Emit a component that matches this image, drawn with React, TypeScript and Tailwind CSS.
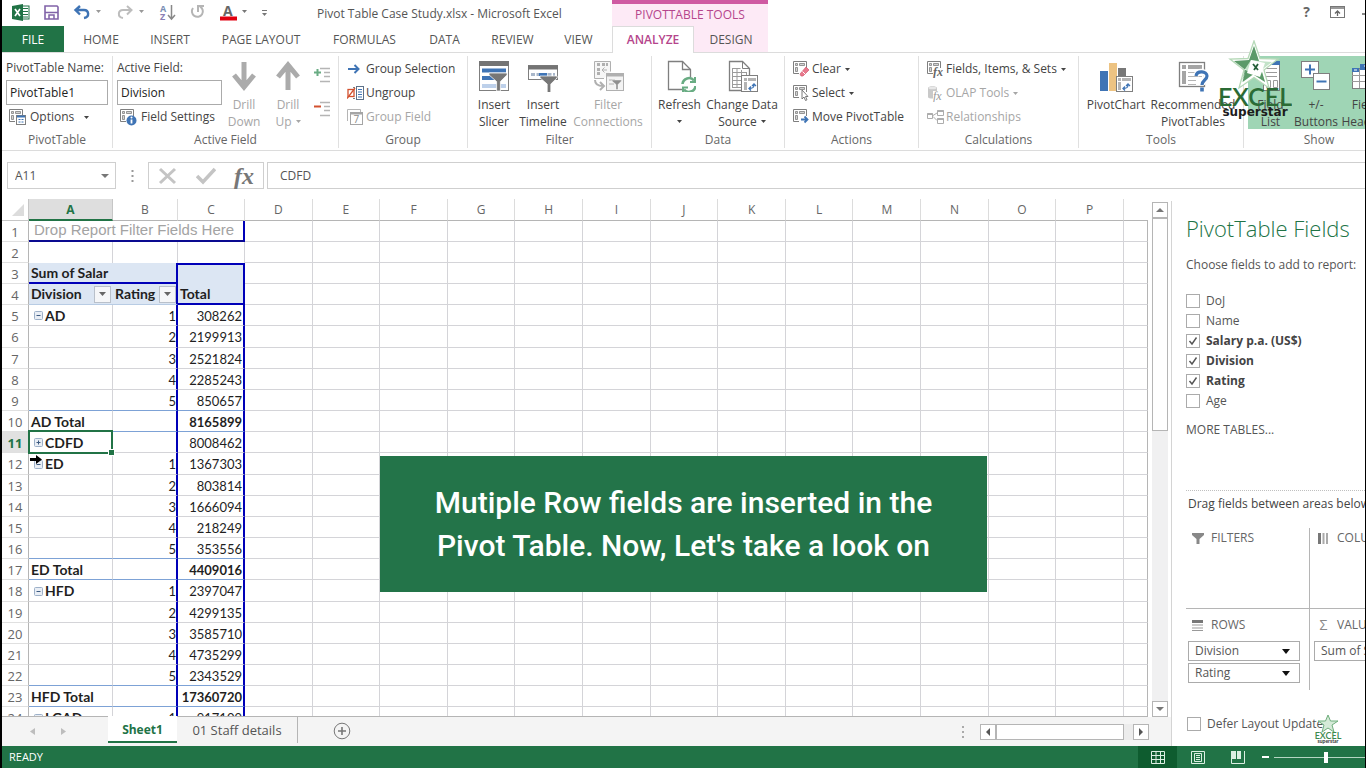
import React from "react";
import type { ReactNode } from "react";

const GRAY = "#7f7f7f";
const BLUE = "#3f74b5";

/* ---------- icons ---------- */

function Svg({ w, h, children, className = "" }: { w: number; h: number; children: ReactNode; className?: string }) {
  return (
    <svg width={w} height={h} viewBox={`0 0 ${w} ${h}`} fill="none" aria-hidden="true" className={`shrink-0 ${className}`}>
      {children}
    </svg>
  );
}

function Caret({ className = "" }: { className?: string }) {
  return (
    <Svg w={5} h={3} className={`inline-block align-middle ${className}`}>
      <path d="M0 0h5L2.5 3z" fill="currentColor" />
    </Svg>
  );
}

function MiniGrid({ color = GRAY }: { color?: string }) {
  return (
    <>
      <path d="M0.5 12.5V0.5H13.5V7M0.5 12.5H6" stroke={color} />
      <path d="M2.5 2.5h2v2h-2zM2.5 6.5h2v4h-2zM6.5 2.5h5v2h-5z" stroke={color} fill={color} fillOpacity="0.35" strokeWidth="0.8" />
    </>
  );
}

const icons = {
  options: (
    <Svg w={17} h={16}>
      <MiniGrid />
      <rect x="7.5" y="6.5" width="9" height="9" fill="#fff" stroke={GRAY} />
      <path d="M8 7.500h8" stroke={BLUE} strokeWidth="2" />
      <path d="M9.500 10.500h2M12.500 10.500h2M9.500 13h2M12.500 13h2" stroke={BLUE} />
    </Svg>
  ),
  fieldSettings: (
    <Svg w={17} h={17}>
      <MiniGrid />
      <circle cx="11.500" cy="11.500" r="5" fill={BLUE} />
      <path d="M11.500 10.500v4" stroke="#fff" strokeWidth="1.800" />
      <circle cx="11.500" cy="8.500" r="1" fill="#fff" />
    </Svg>
  ),
  clear: (
    <Svg w={16} h={16}>
      <MiniGrid />
      <path d="M7 13l6-7 3 3-6 6H8z" fill="#e8798c" stroke="#d4586f" strokeWidth="0.700" />
      <path d="M9.500 10.500l3 3" stroke="#fff" />
    </Svg>
  ),
  select: (
    <Svg w={16} h={16}>
      <MiniGrid />
      <path d="M9 5v9l2-2 1.500 3.500 1.500-.7-1.500-3.300h2.500z" fill="#fff" stroke="#6b6b6b" strokeWidth="0.900" />
    </Svg>
  ),
  move: (
    <Svg w={16} h={16}>
      <MiniGrid />
      <path d="M8 10.500h6M11.500 7.500l3 3-3 3" stroke={BLUE} strokeWidth="1.800" />
    </Svg>
  ),
  fields: (
    <Svg w={17} h={17}>
      <MiniGrid />
      <rect x="6" y="7" width="11" height="10" fill="#fff" />
      <text x="6" y="15" fontSize="12" fontStyle="italic" fontWeight="bold" fontFamily="Liberation Serif, serif" fill="#666">fx</text>
    </Svg>
  ),
  olap: (
    <Svg w={17} h={17}>
      <path d="M1 3c0-2.500 9-2.500 9 0v9c0 2-9 2-9 0z" fill="#c9c9c9" />
      <ellipse cx="5.500" cy="3" rx="4" ry="1.300" fill="#e8e8e8" />
      <rect x="6" y="6" width="11" height="10" fill="#fff" />
      <text x="6" y="15" fontSize="12" fontStyle="italic" fontFamily="Liberation Serif, serif" fill="#999">fx</text>
    </Svg>
  ),
  relations: (
    <Svg w={17} h={16}>
      <g stroke="#adadad">
        <path d="M.5 4.500h5v5h-5zM10.500 1.500h6v5h-6zM10.500 9.500h6v5h-6zM6 6.500l4-2.500M6 7.500l4 4" />
        <path d="M.5 5h5M10.500 2h6M10.500 10h6" strokeWidth="2" />
      </g>
    </Svg>
  ),
  groupSelection: (
    <Svg w={14} h={12}>
      <path d="M1 6h10M7.500 2l4 4-4 4" stroke={BLUE} strokeWidth="2" />
    </Svg>
  ),
  ungroup: (
    <Svg w={17} h={14}>
      <rect x="9.500" y=".5" width="7" height="13" fill="#fff" stroke="#5d7189" />
      <path d="M11 3.500h4M11 6h4M11 8.500h4M11 11h4" stroke={BLUE} />
      <path d="M8 1.500H6M8 12.500H6" stroke={GRAY} />
      <rect x="1" y="3.500" width="6" height="7" fill="#fff" stroke="#d2512f" strokeWidth="1.300" />
      <path d="M0 12.500L8 2" stroke="#d2512f" strokeWidth="1.300" />
    </Svg>
  ),
  groupField: (
    <Svg w={17} h={17}>
      <path d="M.5 12V.5h13V3" stroke="#b5b5b5" />
      <rect x="3.500" y="3.500" width="12" height="12" fill="#fff" stroke="#a5a5a5" />
      <path d="M4 4.500h11" stroke="#a5a5a5" strokeWidth="2" />
      <text x="6.500" y="14" fontSize="10" fontFamily="Open Sans, sans-serif" fill="#8c8c8c">7</text>
    </Svg>
  ),
};

function Funnel({ x, y, s = 1, fill = "#777" }: { x: number; y: number; s?: number; fill?: string }) {
  return <path transform={`translate(${x} ${y}) scale(${s})`} d="M0 0h19v2l-7 7v10h-4V9L0 2z" fill={fill} stroke="#fff" strokeWidth=".8" />;
}

const bigIcons = {
  drillDown: (
    <Svg w={32} h={32}>
      <path d="M16 2v24M6 15l10 12 10-12" stroke="#ababab" strokeWidth="5" />
    </Svg>
  ),
  drillUp: (
    <Svg w={32} h={32}>
      <path d="M16 30V5M6 17L16 5l10 12" stroke="#ababab" strokeWidth="5" />
    </Svg>
  ),
  slicer: (
    <Svg w={32} h={32}>
      <rect x="1.500" y="1.500" width="29" height="29" fill="#fff" stroke={GRAY} />
      <path d="M1 3.500h30" stroke="#747474" strokeWidth="5" />
      <path d="M4 10.500h24M4 18h14" stroke={BLUE} strokeWidth="4" />
      <path d="M4 26h24" stroke="#bdd0ea" strokeWidth="4" />
      <Funnel x={11} y={13} s={0.95} />
    </Svg>
  ),
  timeline: (
    <Svg w={32} h={32}>
      <rect x="1.500" y="5.500" width="29" height="14" fill="#fff" stroke={GRAY} />
      <path d="M1 7.500h30" stroke="#747474" strokeWidth="4" />
      <path d="M4 14.500h24" stroke="#a9b7ca" strokeWidth="3" strokeDasharray="4 1.500" />
      <path d="M12 14.500h8" stroke={BLUE} strokeWidth="3" />
      <Funnel x={13} y={16} s={0.9} />
    </Svg>
  ),
  connections: (
    <Svg w={32} h={32}>
      <g stroke="#b0b0b0">
        <path d="M12 18.500H2.500v-17h16v10" fill="#f6f6f6" />
        <path d="M5 4.500h3M10 4.500h6M6.500 8v8" strokeWidth="3" strokeDasharray="3 1" />
        <path d="M10 10h5M12.500 7.500L10 10l2.500 2.500" />
        <path d="M3 20c0 4 3 6 8 6M8 22l4 4-4 4" strokeWidth="2" />
        <rect x="14.500" y="13.500" width="17" height="17" fill="#f3f3f3" />
        <path d="M14 15h18" strokeWidth="3" />
        <path d="M17 20h6M17 24h5" />
      </g>
      <Funnel x={20} y={20} s={0.5} fill="#8f8f8f" />
    </Svg>
  ),
  refresh: (
    <Svg w={32} h={32}>
      <path d="M4.500 29.500v-28h14l8 8v20z" fill="#fff" stroke={GRAY} strokeWidth="1.300" />
      <path d="M18.500 1.500v8h8" stroke={GRAY} strokeWidth="1.300" />
      <circle cx="25" cy="25" r="8" fill="#fff" />
      <g stroke="#69ac83" strokeWidth="2.600">
        <path d="M18.500 24a6.500 6.500 0 0 1 11.500-3.500M31.500 26a6.500 6.500 0 0 1-11.500 3.500" />
        <path d="M31 17v5h-5M19 32.500v-5h5" strokeWidth="2" />
      </g>
    </Svg>
  ),
  changeSource: (
    <Svg w={32} h={32}>
      <path d="M3.500 30.500v-29h13l7 7v22z" fill="#fff" stroke={GRAY} strokeWidth="1.300" />
      <path d="M16.500 1.500v7h7" stroke={GRAY} />
      <path d="M6.500 8.500h8M6.500 12.500h14M6.500 16.500h14M6.500 20.500h14M6.500 24.500h14M6.500 27.500h14M6.500 8v20M11 8v20M15.500 10v18M20.500 12v16" stroke="#9b9b9b" />
      <rect x="15.500" y="15.500" width="16" height="16" fill="#fff" stroke={GRAY} />
      <path d="M18 18h3v3h-3zM22 18h8v3h-8zM18 22h3v8h-3z" fill="#b4b4b4" />
      <path d="M23 28.500c4 0 5-1 5-4M25 26.500l-2 2 2 2M26 26l2-2 2 2" stroke={BLUE} strokeWidth="1.300" />
    </Svg>
  ),
  chart: (
    <Svg w={34} h={32}>
      <rect x="1" y="11" width="8" height="20" fill={BLUE} />
      <rect x="10" y="3" width="8" height="28" fill="#edc382" />
      <rect x="19" y="8" width="8" height="12" fill="#777" />
      <rect x="17.500" y="16.500" width="16" height="15" fill="#fff" stroke={GRAY} />
      <path d="M19 18h3v3h-3zM23 18h9v3h-9zM19 22h3v8h-3z" fill="#b4b4b4" />
      <path d="M24 28.500c4 0 5-1 5-4M26 26.500l-2 2 2 2M27 26l2-2 2 2" stroke={BLUE} strokeWidth="1.300" />
    </Svg>
  ),
  recommended: (
    <Svg w={32} h={32}>
      <rect x="2.500" y="2.500" width="25" height="24" fill="#fff" stroke={GRAY} strokeWidth="1.300" />
      <path d="M5 5h4v4H5zM11 5h14v4H11zM5 11h4v13H5z" fill="#a5a5a5" />
      <path d="M11 12.500h14M11 16.500h14M11 20.500h8M11 24.500h8" stroke="#b4b4b4" />
      <path d="M19 16c1-6 11-5 11 0 0 4-5 4-5 9" stroke="#fff" strokeWidth="6" />
      <path d="M19 16c1-6 11-5 11 0 0 4-5 4-5 9" stroke={BLUE} strokeWidth="3.200" />
      <rect x="23.200" y="27.500" width="3.600" height="4" fill={BLUE} />
    </Svg>
  ),
  fieldList: (
    <Svg w={32} h={32}>
      <rect x="8.500" y="1.500" width="16" height="29" fill="#fff" stroke={GRAY} />
      <path d="M8 3h17" stroke={BLUE} strokeWidth="4" />
      <path d="M11 8.500h11M11 12.500h11M11 16.500h11" stroke="#9b9b9b" />
      <path d="M11.500 20.500h4v7h-4zM18.500 20.500h4v7h-4z" stroke="#9b9b9b" />
    </Svg>
  ),
  plusMinus: (
    <Svg w={32} h={32}>
      <rect x="1.500" y="1.500" width="17" height="16" fill="#fff" stroke={GRAY} />
      <path d="M5 9.500h10M10 4.500v10" stroke={BLUE} strokeWidth="2" />
      <rect x="13.500" y="13.500" width="16" height="16" fill="#fff" stroke={GRAY} />
      <path d="M16.500 21.500h10" stroke={BLUE} strokeWidth="2" />
    </Svg>
  ),
  headers: (
    <Svg w={32} h={32}>
      <rect x="3.500" y="8.500" width="30" height="20" fill="#fff" stroke={GRAY} />
      <path d="M3 15.500h30M3 21.500h30M10.500 9v19M18 9v19" stroke="#9b9b9b" />
      <path d="M3 8h7v4H3zM11 4h21v6H11z" fill={BLUE} />
      <path d="M5 10h3M15 6h4" stroke="#fff" />
    </Svg>
  ),
};

function SuperstarLogo() {
  return (
    <Svg w={74} h={80}>
      <g transform="translate(36 1)">
        <path d="M0 0l6 17.500 18 .5-14 11 5 18-15-10.500L-15 47l5-18-14-11 18-.5z" fill="#fff" stroke="#b6d9b8" strokeWidth="1.300" />
        <path d="M0 5l4.500 15L18 21 7.500 29 11 41 0 33l-11 8 3.500-12L-18 21l13.500-1z" fill="#c2e3c8" />
        <path d="M0 5l5 15-8-1-6 9-3 13 3.500-12L-20 20l15-1zM11 41L0 34l8-3zM-8.500 29l-3 12 11-8z" fill="#5b9a69" />
        <path d="M-3 19l14 3-5 14-13-4z" fill="#fff" />
        <path d="M4 23l-4 6M-1 23l5 6" stroke="#245f39" strokeWidth="1.800" />
      </g>
      <text x="37" y="66" textAnchor="middle" fontSize="25" fontWeight="600" fontFamily="Lato, sans-serif" fill="#2b6b35">EXCEL</text>
      <text x="37" y="76" textAnchor="middle" fontSize="12" fontWeight="bold" fontFamily="DejaVu Sans, sans-serif" fill="#1c1c1c">superstar</text>
    </Svg>
  );
}

/* ---------- ribbon pieces ---------- */

function Group({ label, width, children, last = false }: { label: string; width: string; children: ReactNode; last?: boolean }) {
  return (
    <section aria-label={label} className={`flex shrink-0 flex-col ${width}`}>
      <div className={`flex h-[92px] flex-col ${last ? "" : "border-r border-[#e0e0e0]"}`}>
        <div className="flex h-[77px]">{children}</div>
        <div className="pt-px text-center leading-4 text-[#666]">{label}</div>
      </div>
    </section>
  );
}

function Row({ icon, children, disabled = false, caret = false }: { icon: ReactNode; children: ReactNode; disabled?: boolean; caret?: boolean }) {
  return (
    <button type="button" disabled={disabled} className={`flex h-6 items-center whitespace-nowrap ${disabled ? "text-[#a6a6a6]" : "text-[#444]"}`}>
      <span className="flex w-[19px] shrink-0">{icon}</span>
      {children}
      {caret && <Caret className="ml-1" />}
    </button>
  );
}

function Big({ icon, lines, width, disabled = false, caret = false }: { icon: ReactNode; lines: string[]; width: string; disabled?: boolean; caret?: boolean }) {
  return (
    <button type="button" disabled={disabled} className={`flex shrink-0 flex-col items-center pt-1 leading-[17px] ${width} ${disabled ? "text-[#a6a6a6]" : "text-[#444]"}`}>
      {icon}
      <span className="mt-1 whitespace-nowrap">{lines[0]}</span>
      <span className="flex min-h-[17px] items-center whitespace-nowrap">
        {lines[1]}
        {caret && <Caret className={lines[1] ? "ml-1" : ""} />}
      </span>
    </button>
  );
}

/* ---------- worksheet data ---------- */

type SheetRow = { n: number; a?: string; sign?: "+" | "-"; b?: string; c?: string; total?: boolean };

const sheetRows: SheetRow[] = [
  { n: 5, a: "AD", sign: "-", b: "1", c: "308262" },
  { n: 6, b: "2", c: "2199913" },
  { n: 7, b: "3", c: "2521824" },
  { n: 8, b: "4", c: "2285243" },
  { n: 9, b: "5", c: "850657" },
  { n: 10, a: "AD Total", c: "8165899", total: true },
  { n: 11, a: "CDFD", sign: "+", c: "8008462" },
  { n: 12, a: "ED", sign: "-", b: "1", c: "1367303" },
  { n: 13, b: "2", c: "803814" },
  { n: 14, b: "3", c: "1666094" },
  { n: 15, b: "4", c: "218249" },
  { n: 16, b: "5", c: "353556" },
  { n: 17, a: "ED Total", c: "4409016", total: true },
  { n: 18, a: "HFD", sign: "-", b: "1", c: "2397047" },
  { n: 19, b: "2", c: "4299135" },
  { n: 20, b: "3", c: "3585710" },
  { n: 21, b: "4", c: "4735299" },
  { n: 22, b: "5", c: "2343529" },
  { n: 23, a: "HFD Total", c: "17360720", total: true },
  { n: 24, a: "LGAD", sign: "-", b: "1", c: "917109" },
];

const letters = ["D", "E", "F", "G", "H", "I", "J", "K", "L", "M", "N", "O", "P"];
const rowHeight = (n: number) => (n % 6 === 0 ? "h-[22px]" : "h-[21px]");

function RowHead({ n }: { n: number }) {
  const active = n === 11;
  return (
    <th scope="row" className={`border-b border-r border-b-[#e0e0e0] border-r-[#b5b5b5] px-0 pb-0 pt-px text-center font-[Open_Sans,sans-serif] ${active ? "bg-[#e1e1e1] font-bold text-[#217346]" : "font-normal text-[#666]"}`}>
      {n}
    </th>
  );
}

function Blank() {
  return (
    <>
      {letters.map((l) => (
        <td key={l} className="border-b border-r border-[#d4d4d8] p-0" />
      ))}
      <td className="border-b border-r border-b-[#d4d4d8] border-r-[#b5b5b5] p-0" />
    </>
  );
}

function FilterButton({ label }: { label: string }) {
  return (
    <button type="button" aria-label={label} className="flex h-[17px] w-[17px] shrink-0 items-center justify-center border border-[#b9c0ca] bg-[#f5f6f8] text-[#666]">
      <Svg w={7} h={4}>
        <path d="M0 0h7L3.500 4z" fill="currentColor" />
      </Svg>
    </button>
  );
}

function Outline({ sign }: { sign: "+" | "-" }) {
  return (
    <Svg w={9} h={9}>
      <rect x=".5" y=".5" width="8" height="8" rx="1" fill="#e9eef5" stroke="#9db0c8" />
      <path d={sign === "+" ? "M2.500 4.500h4M4.500 2.500v4" : "M2.500 4.500h4"} stroke="#3c5a80" />
    </Svg>
  );
}

function Worksheet() {
  return (
    <table className="w-full table-fixed border-separate border-spacing-0 font-[Lato,sans-serif] text-[13px] leading-4 text-[#1f1f1f]">
      <colgroup>
        <col className="w-[27px]" />
        <col className="w-[84px]" />
        <col className="w-[65px]" />
        <col className="w-[67px]" />
        {letters.map((l) => (
          <col key={l} />
        ))}
        <col className="w-6" />
      </colgroup>
      <thead className="font-[Open_Sans,sans-serif] text-xs text-[#666]">
        <tr className="h-[22px]">
          <th className="border-b border-r border-[#c6c6c6] p-0">
            <Svg w={12} h={12} className="ml-auto mr-1">
              <path d="M12 0v12H0z" fill="#dcdcdc" />
            </Svg>
          </th>
          <th scope="col" className="border-b-2 border-r border-b-[#217346] border-r-[#c6c6c6] bg-[#dedede] px-0 pb-0 pt-px font-bold text-[#217346]">A</th>
          {["B", "C", ...letters].map((l) => (
            <th key={l} scope="col" className="border-b border-r border-b-[#b5b5b5] border-r-[#dcdcdc] p-0 font-normal">{l}</th>
          ))}
          <th className="border-b border-[#b5b5b5] p-0" />
        </tr>
      </thead>
      <tbody>
        <tr className={rowHeight(1)}>
          <RowHead n={1} />
          <td colSpan={3} className="whitespace-nowrap border-b-2 border-r-2 border-b-[#0a0a90] border-r-[#0000b8] px-[5px] pb-[2px] pt-0 font-[Liberation_Sans,sans-serif] text-[15px] leading-4 text-[#a3a3a3]">Drop Report Filter Fields Here</td>
          <Blank />
        </tr>
        <tr className={rowHeight(2)}>
          <RowHead n={2} />
          <td className="border-r border-[#d4d4d8] p-0" />
          <td className="border-r border-[#d4d4d8] p-0" />
          <td className="border-r border-[#d4d4d8] p-0" />
          <Blank />
        </tr>
        <tr className={rowHeight(3)}>
          <RowHead n={3} />
          <td colSpan={2} className="border-b-2 border-r-2 border-[#0000b8] bg-[#dce6f3] px-[2px] pb-0 pt-px text-sm font-bold leading-4">Sum of Salar</td>
          <td className="border-r-2 border-t-2 border-[#0000b8] bg-[#dce6f3] p-0" />
          <Blank />
        </tr>
        <tr className={rowHeight(4)}>
          <RowHead n={4} />
          <td className="border-b border-[#b8cce4] bg-[#dce6f3] py-0 pl-[2px] pr-[2px] text-sm font-bold leading-4">
            <span className="flex items-center justify-between">Division<FilterButton label="Filter Division" /></span>
          </td>
          <td className="border-b border-r-2 border-b-[#b8cce4] border-r-[#0000b8] bg-[#dce6f3] py-0 pl-[2px] pr-0 text-sm font-bold leading-4">
            <span className="flex items-center justify-between">Rating<FilterButton label="Filter Rating" /></span>
          </td>
          <td className="border-b-2 border-r-2 border-[#0000b8] bg-[#dce6f3] px-[2px] pb-0 pt-px text-sm font-bold leading-4">Total</td>
          <Blank />
        </tr>
        {sheetRows.map((r, i) => {
          const ruled = r.total || sheetRows[i + 1]?.total;
          const line = ruled ? "border-b-[#7da2d6]" : "border-b-[#d4d4d8]";
          return (
            <tr key={r.n} className={rowHeight(r.n)}>
              <RowHead n={r.n} />
              <td className={`relative border-b border-r border-r-[#d4d4d8] px-[2px] pb-0 pt-px text-sm font-bold leading-4 ${line}`}>
                <span className="flex items-center whitespace-nowrap">
                  {r.sign && (
                    <span className="mr-[2px] ml-[3px] flex">
                      <Outline sign={r.sign} />
                    </span>
                  )}
                  {r.a}
                </span>
                {r.n === 11 && (
                  <span className="absolute -inset-x-px -top-[2px] -bottom-[2px] z-10 border-2 border-[#217346]">
                    <span className="absolute -right-[3px] -bottom-[3px] h-[5px] w-[5px] bg-[#217346] outline outline-white" />
                  </span>
                )}
                {r.n === 12 && (
                  <Svg w={12} h={9} className="absolute left-px top-[2px] z-20">
                    <path d="M0 3h6V0l6 4.500L6 9V6H0z" fill="#000" />
                  </Svg>
                )}
              </td>
              <td className={`border-b border-r-2 border-r-[#0000b8] px-0 pb-0 pt-px text-right ${line}`}>{r.b}</td>
              <td className={`border-b border-r-2 border-r-[#0000b8] pb-0 pl-0 pr-px pt-px text-right ${line} ${r.total ? "font-bold" : ""}`}>{r.c}</td>
              <Blank />
            </tr>
          );
        })}
      </tbody>
    </table>
  );
}

/* ---------- field pane ---------- */

function Check({ label, checked = false }: { label: string; checked?: boolean }) {
  return (
    <label className={`flex h-5 items-center gap-[6px] whitespace-nowrap ${checked ? "font-bold text-[#444]" : "text-[#555]"}`}>
      <span className="grid">
        <input type="checkbox" defaultChecked={checked} className="peer col-start-1 row-start-1 h-[14px] w-[14px] appearance-none border border-[#ababab] bg-white" />
        <Svg w={14} h={14} className="pointer-events-none invisible col-start-1 row-start-1 peer-checked:visible">
          <path d="M3.500 7l2.500 3 4.500-6.500" stroke="#555" strokeWidth="1.400" />
        </Svg>
      </span>
      {label}
    </label>
  );
}

function Area({ icon, title, children }: { icon: ReactNode; title: string; children?: ReactNode }) {
  return (
    <div className="min-w-0">
      <h3 className="flex h-8 items-center gap-2 whitespace-nowrap pl-1 text-[#666]">
        <span className="flex w-[11px] justify-center">{icon}</span>
        {title}
      </h3>
      <div className="flex flex-col gap-[2px]">{children}</div>
    </div>
  );
}

function Chip({ label }: { label: string }) {
  return (
    <button type="button" className="flex h-5 w-28 items-center justify-between whitespace-nowrap border border-[#ababab] pl-[6px] pr-[9px] text-[#555]">
      {label}
      <Svg w={8} h={5}>
        <path d="M0 0h8L4 5z" fill="#111" />
      </Svg>
    </button>
  );
}

function FieldPane() {
  return (
    <aside className="flex w-[193px] shrink-0 flex-col overflow-hidden pl-[14px] pt-[15px]">
      <h2 className="whitespace-nowrap font-[Open_Sans,sans-serif] text-[22px] font-light leading-7 text-[#217346]">PivotTable Fields</h2>
      <p className="mt-[15px] whitespace-nowrap leading-4 text-[#555]">Choose fields to add to report:</p>
      <div className="mt-[18px] flex flex-col">
        <Check label="DoJ" />
        <Check label="Name" />
        <Check label="Salary p.a. (US$)" checked />
        <Check label="Division" checked />
        <Check label="Rating" checked />
        <Check label="Age" />
      </div>
      <a href="#more" className="mt-[11px] leading-4 text-[#555]">MORE TABLES...</a>
      <div className="mt-[52px] border-t border-dotted border-[#c0c0c0]" />
      <p className="mt-[5px] whitespace-nowrap pl-[2px] leading-4 text-[#444]">Drag fields between areas below:</p>
      <div className="mt-[16px] grid grid-cols-[124px_122px] grid-rows-[81px_81px]">
        <div className="border-b border-r border-[#b5b5b5]">
          <div className="-mt-2 pl-[2px] pt-[2px]">
            <Area title="FILTERS" icon={<Svg w={12} h={11}><path d="M0 0h12v2L7.500 6v5h-3V6L0 2z" fill="#888" /></Svg>} />
          </div>
        </div>
        <div className="border-b border-[#b5b5b5] pl-1">
          <div className="-mt-2 pt-[2px]">
            <Area title="COLUMNS" icon={<Svg w={11} h={11}><path d="M1.500 0v11" stroke="#777" strokeWidth="3" /><path d="M5.500 0v11M9 0v11" stroke="#aaa" strokeWidth="2" /></Svg>} />
          </div>
        </div>
        <div className="border-r border-[#b5b5b5] pl-[2px]">
          <Area title="ROWS" icon={<Svg w={11} h={11}><path d="M0 1.500h11" stroke="#777" strokeWidth="3" /><path d="M0 5h11M0 8h11M0 10.500h11" stroke="#999" /></Svg>}>
            <Chip label="Division" />
            <Chip label="Rating" />
          </Area>
        </div>
        <div className="pl-1">
          <Area title="VALUES" icon={<span className="text-sm text-[#888]">Σ</span>}>
            <Chip label="Sum of Salary" />
          </Area>
        </div>
      </div>
      <div className="mt-auto mb-3 pl-px">
        <Check label="Defer Layout Update" />
      </div>
    </aside>
  );
}

/* ---------- chrome ---------- */

function QuickAccess() {
  return (
    <div className="flex w-[278px] shrink-0 items-center text-[#777]">
      <Svg w={272} h={24}>
        <rect x="17" y="5" width="10" height="13" fill="#fff" stroke="#217346" />
        <path d="M20 7.500h6M20 10.500h6M20 13.500h6M20 16h6" stroke="#217346" />
        <path d="M10 5l11-2v17l-11-2z" fill="#217346" />
        <path d="M13 8l5 7M18 8l-5 7" stroke="#fff" strokeWidth="1.700" />
        <path d="M43 5h12l1 1v12H43z" fill="#fff" stroke="#8163a8" strokeWidth="1.600" />
        <path d="M43 11.500h13M47 18v-4h5v4" stroke="#8163a8" strokeWidth="1.500" />
        <path d="M78 5l-4.500 4 4.500 4.500M74 9h8c5 0 6 7 0 8" stroke={BLUE} strokeWidth="2.400" />
        <path d="M94 9h5l-2.500 3zM137 9h5l-2.500 3z" fill="#999" />
        <path d="M125 5l4.500 4-4.500 4.500M129 9h-8c-5 0-6 7 0 8" stroke="#bdbdbd" strokeWidth="2" />
        <text x="158" y="11" fontSize="9" fontWeight="bold" fontFamily="Open Sans, sans-serif" fill="#7a8fb5">A</text>
        <text x="158" y="19" fontSize="9" fontWeight="bold" fontFamily="Open Sans, sans-serif" fill="#8a7fb5">Z</text>
        <path d="M169.500 4v13M166 14l3.500 4 3.500-4" stroke="#888" strokeWidth="1.500" />
        <path d="M191 7a5.500 5.500 0 1 0 7-1.500M196 11V5h6" stroke="#b5b5b5" strokeWidth="2" />
        <text x="221" y="15" fontSize="14" fontWeight="bold" fontFamily="Open Sans, sans-serif" fill="#666">A</text>
        <path d="M218 17.500h17" stroke="#e00010" strokeWidth="4" />
        <path d="M240 9h5l-2.500 3z" fill="#777" />
        <path d="M260 9.500h5" stroke="#777" />
        <path d="M260 12h5l-2.500 3z" fill="#777" />
      </Svg>
    </div>
  );
}

const tabs: [string, string][] = [
  ["HOME", "w-[74px]"],
  ["INSERT", "w-[64px]"],
  ["PAGE LAYOUT", "w-[118px]"],
  ["FORMULAS", "w-[89px]"],
  ["DATA", "w-[71px]"],
  ["REVIEW", "w-[65px]"],
  ["VIEW", "w-[67px]"],
];

export default function App() {
  return (
    <div className="relative flex h-screen flex-col overflow-hidden border-l-2 border-r border-black bg-white font-[Open_Sans,sans-serif] text-xs text-[#444]">
      {/* title and tabs */}
      <header className="flex h-[52px] shrink-0">
        <div className="flex w-[610px] shrink-0 flex-col">
          <div className="flex h-[26px] items-center whitespace-nowrap">
            <QuickAccess />
            <h1 className="ml-[37px] pt-[2px] text-[12px] text-[#555]">Pivot Table Case Study.xlsx - Microsoft Excel</h1>
          </div>
          <nav className="flex h-[26px]">
            <button type="button" className="w-[62px] bg-[#217346] pt-[2px] text-white">FILE</button>
            {tabs.map(([t, w]) => (
              <button key={t} type="button" className={`whitespace-nowrap pt-[2px] text-[#555] ${w}`}>{t}</button>
            ))}
          </nav>
        </div>
        <div className="w-[156px] shrink-0 border-t-4 border-[#cf5aa2] bg-[#fdeaf6]">
          <div className="flex h-[22px] items-center justify-center pb-px text-[#b5458c]">PIVOTTABLE TOOLS</div>
          <nav className="flex h-[27px]">
            <button type="button" className="relative z-10 w-[82px] border border-b-0 border-[#dcdcdc] bg-white font-semibold text-[#b5458c]">ANALYZE</button>
            <button type="button" className="flex-1 pt-px text-[#555]">DESIGN</button>
          </nav>
        </div>
        <div className="flex min-w-0 flex-1 items-start justify-end overflow-hidden pt-[3px]">
          <button type="button" aria-label="Help" className="mr-5 text-sm font-bold leading-[18px] text-[#666]">?</button>
          <button type="button" aria-label="Ribbon Display Options" className="mr-[17px] mt-[3px]">
            <Svg w={15} h={12}>
              <rect x=".5" y=".5" width="14" height="11" stroke="#777" />
              <path d="M1 2h13" stroke="#999" strokeWidth="2" />
              <path d="M7.500 10V5M5 7.500L7.500 5 10 7.500" stroke="#666" strokeWidth="1.300" />
            </Svg>
          </button>
          <span className="mt-[10px] h-[2px] w-[3px] bg-[#888]" />
        </div>
      </header>

      {/* ribbon */}
      <div className="flex h-[99px] shrink-0 overflow-hidden border-y border-[#dcdcdc] pt-[3px]">
        <Group label="PivotTable" width="w-[111px]">
          <div className="pl-1">
            <label htmlFor="ptname" className="block h-6 whitespace-nowrap leading-6">PivotTable Name:</label>
            <input id="ptname" defaultValue="PivotTable1" className="block h-[25px] w-[102px] border border-[#ababab] px-[3px] text-[#222]" />
            <Row icon={<span className="ml-[3px]">{icons.options}</span>}>
              <span className="ml-[5px]">Options</span>
              <Caret className="ml-[10px]" />
            </Row>
          </div>
        </Group>
        <Group label="Active Field" width="w-[226px]">
          <div className="pl-1">
            <label htmlFor="actfield" className="block h-6 leading-6">Active Field:</label>
            <input id="actfield" defaultValue="Division" className="block h-[25px] w-[105px] border border-[#ababab] px-[3px] text-[#222]" />
            <Row icon={<span className="ml-[3px]">{icons.fieldSettings}</span>}>
              <span className="ml-[5px]">Field Settings</span>
            </Row>
          </div>
          <Big icon={bigIcons.drillDown} lines={["Drill", "Down"]} width="ml-1 w-9" disabled />
          <Big icon={bigIcons.drillUp} lines={["Drill", "Up"]} width="ml-2 w-9" disabled caret />
          <div className="ml-2 flex flex-col gap-[18px] pt-[11px]">
            <button type="button" aria-label="Expand Field" className="block">
              <Svg w={16} h={16}>
                <path d="M6 1.500h10M10 5.500h6M10 9.500h6M6 14.500h10" stroke="#b5b5b5" strokeWidth="1.500" />
                <path d="M0 5.500h7M3.500 2v7" stroke="#69ac83" strokeWidth="2" />
              </Svg>
            </button>
            <button type="button" aria-label="Collapse Field" className="block">
              <Svg w={16} h={16}>
                <path d="M6 1.500h10M10 5.500h6M10 9.500h6M6 14.500h10" stroke="#b5b5b5" strokeWidth="1.500" />
                <path d="M0 5.500h7" stroke="#d2512f" strokeWidth="2" />
              </Svg>
            </button>
          </div>
        </Group>
        <Group label="Group" width="w-[129px]">
          <div className="pl-2 pt-px">
            <Row icon={icons.groupSelection}>Group Selection</Row>
            <Row icon={icons.ungroup}>Ungroup</Row>
            <Row icon={icons.groupField} disabled>Group Field</Row>
          </div>
        </Group>
        <Group label="Filter" width="w-[184px]">
          <Big icon={bigIcons.slicer} lines={["Insert", "Slicer"]} width="ml-1 w-11" />
          <Big icon={bigIcons.timeline} lines={["Insert", "Timeline"]} width="w-[54px]" />
          <Big icon={bigIcons.connections} lines={["Filter", "Connections"]} width="w-[76px]" disabled />
        </Group>
        <Group label="Data" width="w-[133px]">
          <Big icon={bigIcons.refresh} lines={["Refresh", ""]} width="ml-1 w-[47px]" caret />
          <Big icon={bigIcons.changeSource} lines={["Change Data", "Source"]} width="w-[78px]" caret />
        </Group>
        <Group label="Actions" width="w-[134px]">
          <div className="pl-2 pt-px">
            <Row icon={icons.clear} caret>Clear</Row>
            <Row icon={icons.select} caret>Select</Row>
            <Row icon={icons.move}>Move PivotTable</Row>
          </div>
        </Group>
        <Group label="Calculations" width="w-[160px]">
          <div className="pl-2 pt-px">
            <Row icon={icons.fields} caret>Fields, Items, &amp; Sets</Row>
            <Row icon={icons.olap} disabled caret>OLAP Tools</Row>
            <Row icon={icons.relations} disabled>Relationships</Row>
          </div>
        </Group>
        <Group label="Tools" width="w-[165px]">
          <Big icon={bigIcons.chart} lines={["PivotChart", ""]} width="ml-1 w-[66px]" />
          <Big icon={bigIcons.recommended} lines={["Recommended", "PivotTables"]} width="w-[88px]" />
        </Group>
        <Group label="Show" width="w-[150px]" last>
          <div className="ml-1 flex h-[73px] w-[144px] bg-[#9fd5b5]">
            <Big icon={bigIcons.fieldList} lines={["Field", "List"]} width="w-[45px]" />
            <Big icon={bigIcons.plusMinus} lines={["+/-", "Buttons"]} width="w-[46px]" />
            <Big icon={bigIcons.headers} lines={["Field", "Headers"]} width="w-[52px]" />
          </div>
        </Group>
      </div>

      {/* formula bar */}
      <div className="flex h-[48px] shrink-0 items-start pt-[11px]">
        <div className="ml-[5px] flex h-[27px] w-[109px] shrink-0 items-center border border-[#cfcfcf] pr-[6px]">
          <input aria-label="Name Box" defaultValue="A11" className="w-full min-w-0 pl-[7px] text-[#555]" />
          <Svg w={8} h={4}>
            <path d="M0 0h8L4 4z" fill="#777" />
          </Svg>
        </div>
        <Svg w={32} h={27}>
          <path d="M16.500 8v12" stroke="#999" strokeWidth="2" strokeDasharray="2 3" />
        </Svg>
        <div className="flex h-[27px] w-[116px] shrink-0 items-center justify-between border border-[#cfcfcf] px-[9px]">
          <button type="button" aria-label="Cancel">
            <Svg w={20} h={18}><path d="M2 2l15 14M17 2L2 16" stroke="#c4c4c4" strokeWidth="3" /></Svg>
          </button>
          <button type="button" aria-label="Enter">
            <Svg w={20} h={18}><path d="M1 9l6 6L19 2" stroke="#c4c4c4" strokeWidth="3.600" /></Svg>
          </button>
          <button type="button" aria-label="Insert Function" className="font-[Liberation_Serif,serif] text-2xl font-bold italic leading-6 text-[#777]">fx</button>
        </div>
        <input aria-label="Formula Bar" defaultValue="CDFD" className="ml-[3px] h-[27px] min-w-0 flex-1 border border-r-0 border-[#cfcfcf] pl-3 text-[#555]" />
      </div>

      {/* workbook */}
      <div className="flex min-h-0 flex-1">
        <div className="flex min-w-0 flex-1 flex-col">
          <div className="flex min-h-0 flex-1">
            <main className="min-w-0 flex-1 overflow-hidden border-b border-[#b5b5b5]">
              <Worksheet />
            </main>
            <div className="flex w-[23px] shrink-0 flex-col items-center pt-[3px]">
              <button type="button" aria-label="Scroll up" className="flex h-4 w-4 items-center justify-center border border-[#b5b5b5]">
                <Svg w={8} h={4}><path d="M4 0l4 4H0z" fill="#777" /></Svg>
              </button>
              <div className="w-4 flex-1 bg-[#f0f0f1]">
                <div className="h-[44%] border border-[#b5b5b5] bg-white" />
              </div>
              <button type="button" aria-label="Scroll down" className="flex h-4 w-4 items-center justify-center border border-[#b5b5b5]">
                <Svg w={8} h={4}><path d="M0 0h8L4 4z" fill="#777" /></Svg>
              </button>
            </div>
          </div>
          <div className="flex h-[29px] shrink-0 items-start bg-[#f4f4f4]">
            <div className="flex h-full w-[106px] items-center pl-7">
              <Svg w={5} h={7}><path d="M5 0v7L0 3.500z" fill="#bdbdbd" /></Svg>
              <Svg w={5} h={7} className="ml-[26px]"><path d="M0 0v7l5-3.500z" fill="#bdbdbd" /></Svg>
            </div>
            <button type="button" className="-mt-px h-[27px] w-[69px] border-b-2 border-[#217346] bg-white pt-[2px] font-bold text-[#217346]">Sheet1</button>
            <button type="button" className="h-[26px] w-[121px] border-r border-[#b5b5b5] pt-px text-[13px] text-[#555]">01 Staff details</button>
            <button type="button" aria-label="New sheet" className="ml-[35px] mt-[5px]">
              <Svg w={18} h={18}><circle cx="9" cy="9" r="7.800" stroke="#777" /><path d="M5 9h8M9 5v8" stroke="#777" strokeWidth="1.600" /></Svg>
            </button>
            <div className="ml-auto mr-[22px] flex items-center pt-[7px]">
              <Svg w={4} h={14} className="mr-[15px]"><path d="M2 1v12" stroke="#aaa" strokeWidth="2" strokeDasharray="2 3" /></Svg>
              <button type="button" aria-label="Scroll left" className="flex h-4 w-4 items-center justify-center border border-[#b5b5b5] bg-white">
                <Svg w={4} h={8}><path d="M4 0v8L0 4z" fill="#555" /></Svg>
              </button>
              <div className="h-4 w-[137px] bg-[#ececec]">
                <div className="h-4 w-[128px] border border-[#b5b5b5] bg-white" />
              </div>
              <button type="button" aria-label="Scroll right" className="flex h-4 w-4 items-center justify-center border border-[#b5b5b5] bg-white">
                <Svg w={4} h={8}><path d="M0 0v8l4-4z" fill="#555" /></Svg>
              </button>
            </div>
          </div>
        </div>
        <div className="mt-[2px] w-px shrink-0 bg-[#d4d4d4]" />
        <FieldPane />
      </div>

      {/* status bar */}
      <footer className="flex h-[22px] shrink-0 items-center overflow-hidden bg-[#217346] text-[11px] text-white">
        <span className="pl-[7px] pt-px">READY</span>
        <div className="ml-auto flex h-full items-center">
          <button type="button" aria-label="Normal view" className="flex h-full w-[39px] items-center justify-center bg-[#0e5c2f]">
            <Svg w={14} h={13}><path d="M.5.5h13v12H.5zM.5 4.500h13M.5 8.500h13M5 .5v12M9.500.5v12" stroke="#dcefe3" /></Svg>
          </button>
          <button type="button" aria-label="Page layout view" className="flex w-[41px] items-center justify-center">
            <Svg w={14} h={13}><path d="M.5.5h13v12H.5zM3.500 2.500h7v8h-7zM5 4.500h4M5 6.500h4M5 8.500h4" stroke="#dcefe3" /></Svg>
          </button>
          <button type="button" aria-label="Page break view" className="flex w-[40px] items-center justify-center">
            <Svg w={14} h={13}><path d="M.5 0v12.500h13V0" stroke="#dcefe3" /><path d="M1 0h4v8H1zM6 0h4v8H6z" fill="#dcefe3" /></Svg>
          </button>
          <button type="button" aria-label="Zoom out" className="ml-1 h-[2px] w-[7px] bg-white" />
          <div className="ml-[5px] flex w-[91px] overflow-hidden">
            <input type="range" aria-label="Zoom" defaultValue={50} className="h-4 w-[104px] shrink-0 appearance-none bg-transparent [&::-webkit-slider-runnable-track]:h-px [&::-webkit-slider-runnable-track]:bg-[#b5d5c2] [&::-webkit-slider-thumb]:-mt-[5px] [&::-webkit-slider-thumb]:h-[11px] [&::-webkit-slider-thumb]:w-1 [&::-webkit-slider-thumb]:appearance-none [&::-webkit-slider-thumb]:bg-white" />
          </div>
        </div>
      </footer>

      {/* overlays */}
      <div className="pointer-events-none absolute right-[73px] top-10">
        <SuperstarLogo />
      </div>
      <div className="pointer-events-none absolute bottom-[24px] right-[22px]">
        <Svg w={30} h={30}>
          <path d="M15 1l2.500 6H25l-6 4 2 7-6-4-6 4 2-7-6-4h7.500z" fill="#d5ead8" stroke="#6fae7c" />
          <text x="15" y="25" textAnchor="middle" fontSize="9" fontWeight="600" fontFamily="Lato, sans-serif" fill="#3d8a4e">EXCEL</text>
          <text x="15" y="29" textAnchor="middle" fontSize="5" fontWeight="bold" fontFamily="Lato, sans-serif" fill="#333">superstar</text>
        </Svg>
      </div>
      <div className="absolute left-[378px] top-[456px] flex h-[136px] w-[607px] items-center justify-center bg-[#237449] text-center font-[Roboto,sans-serif] text-[30px] font-medium leading-[43px] text-white">
        <p>
          Mutiple Row fields are inserted in the
          <br />
          Pivot Table. Now, Let's take a look on
        </p>
      </div>
    </div>
  );
}
